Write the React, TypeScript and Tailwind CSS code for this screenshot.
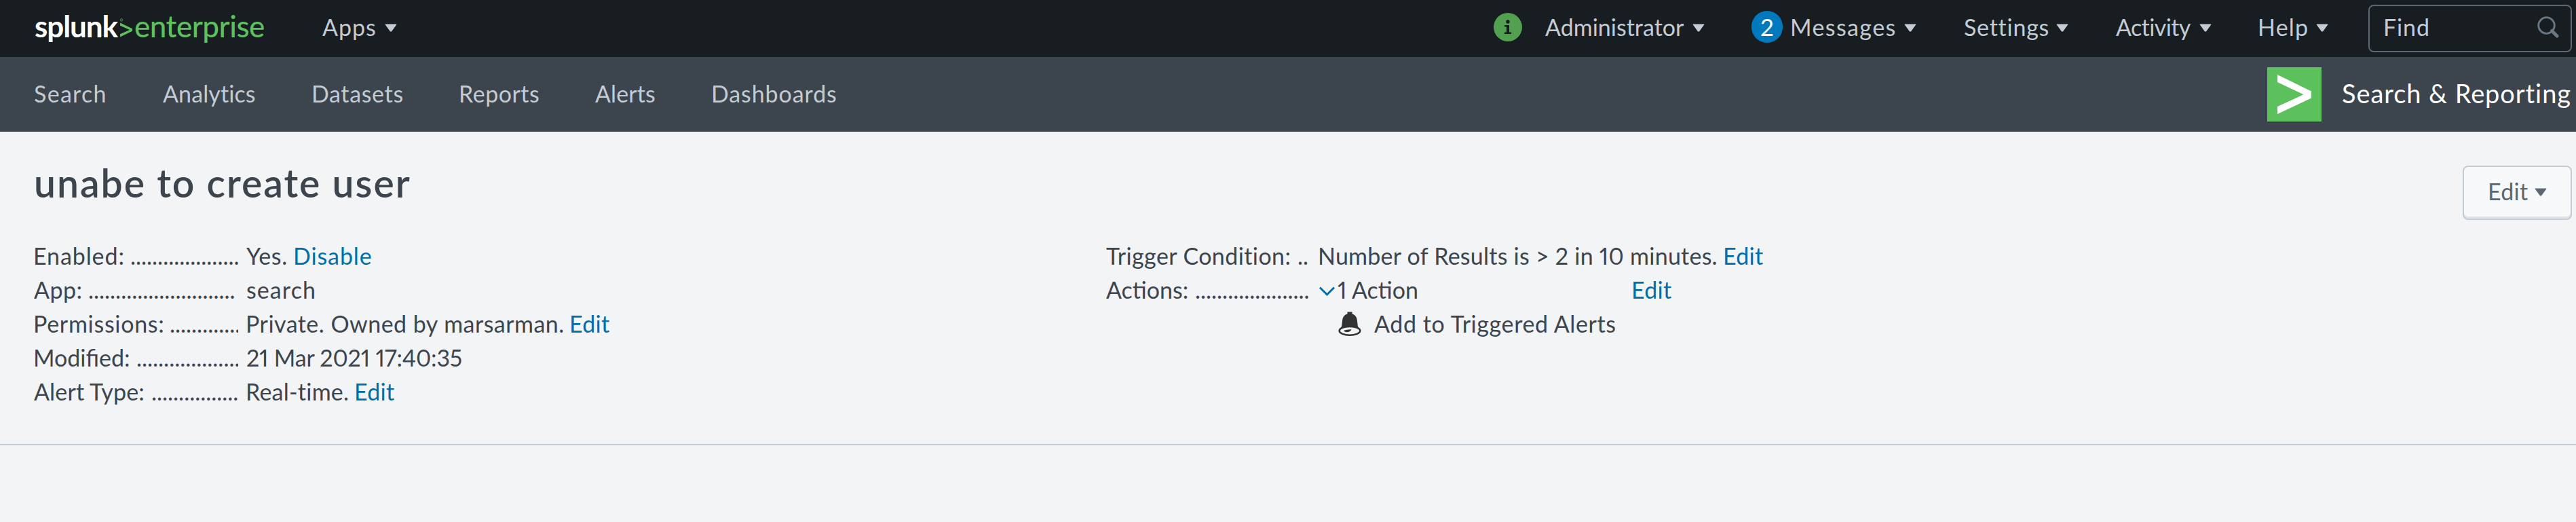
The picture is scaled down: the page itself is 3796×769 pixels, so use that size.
import type { ReactNode } from "react";

function Caret({ className = "" }: { className?: string }) {
  return (
    <svg viewBox="0 0 18 12" className={`h-[12px] w-[18px] shrink-0 ${className}`} fill="currentColor">
      <path d="M1.2 0.5h15.6q1 0 .4.9L10.3 11q-1.3 1.2-2.6 0L.8 1.4q-.6-.9.4-.9z" />
    </svg>
  );
}

function MenuItem({ box, text, children }: { box: string; text: string; children: ReactNode }) {
  return (
    <div className={`flex h-[80px] shrink-0 items-center justify-between ${box}`}>
      <span className={text}>{children}</span>
      <Caret className="mt-[1px]" />
    </div>
  );
}

function Logo() {
  return (
    <div className="flex h-[76px] w-[340px] shrink-0 items-start whitespace-nowrap text-[44px] leading-[76px]">
      <span className="w-[125px] font-bold tracking-[-1.1px] text-white">splunk</span>
      <svg viewBox="0 0 20 30" className="mt-[26px] h-[30px] w-[20px] shrink-0 text-[#5cc05c]" fill="none">
        <path d="M1 7.5v4.2L15 18 1 24.3v4.2L19 19.8v-3.6z" fill="currentColor" />
        <circle cx="3" cy="3.4" r="1.7" stroke="currentColor" strokeOpacity="0.7" />
      </svg>
      <span className="ml-[2px] font-medium tracking-[-0.5px] text-[#5cc05c]">enterprise</span>
    </div>
  );
}

function Link({ children }: { children: ReactNode }) {
  return <a className="tracking-[0.29px] text-[#006eaa]">{children}</a>;
}

type RowProps = { label: string; labelClass: string; labelWidth: string; dots: number; children: ReactNode };

function Row({ label, labelClass, labelWidth, dots, children }: RowProps) {
  return (
    <div className="flex h-[50px] whitespace-nowrap">
      <div className="flex w-[301px] shrink-0 overflow-hidden">
        <span className={`shrink-0 ${labelWidth}`}>
          <span className={labelClass}>{label}</span>
        </span>
        <span>{".".repeat(dots)}</span>
      </div>
      <div className="ml-[12px] flex">{children}</div>
    </div>
  );
}

function Bell() {
  return (
    <svg viewBox="0 0 34 36" className="mt-[7px] h-[36px] w-[34px] shrink-0" fill="none">
      <path
        d="M13.5 0.5h7v3c5 1.3 7 5 7.5 10.5l.9 7.5c.6 1.7 2 2.5 2.6 4H2.5c.8-1.6 2.1-2.4 2.6-4L6 14C6.5 8.5 8.5 4.800 13.5 3.5z"
        fill="#333"
      />
      <ellipse cx="17" cy="28.3" rx="15.3" ry="6.4" fill="#f2f4f5" stroke="#333" strokeWidth="2.6" />
      <path d="M8.5 27.8Q13 26 19.500 26.200Q18 30.300 12.500 30.300Q8.500 30 8.500 27.800z" fill="#333" />
    </svg>
  );
}

export default function App() {
  return (
    <div className="flex h-[769px] w-[3796px] flex-col overflow-hidden whitespace-nowrap bg-[#f2f4f5] font-[Lato,sans-serif] text-[34px] text-[#3c444d] proportional-nums">
      <header className="flex h-[84px] shrink-0 items-start bg-[#171d21] pl-[51px] leading-[80px] text-[#c3cbd4]">
        <Logo />
        <MenuItem box="ml-[84px] w-[110px]" text="tracking-[0.98px]">Apps</MenuItem>
        <div className="ml-[1616px] mt-[19px] flex h-[42px] w-[42px] shrink-0 items-center justify-center rounded-full bg-[#53a051]">
          <svg viewBox="0 0 12 22" className="h-[22px] w-[12px]" fill="#171d21">
            <circle cx="6" cy="3" r="2.7" />
            <path d="M1 8h7v10.5h3V21H1v-2.5h3V10.5H1z" />
          </svg>
        </div>
        <MenuItem box="ml-[34px] w-[235px]" text="">Administrator</MenuItem>
        <div className="ml-[69px] mt-[16px] flex h-[47px] w-[46px] shrink-0 justify-center rounded-full bg-[#007abd] text-[35px] leading-[47px] text-white">2</div>
        <MenuItem box="ml-[11px] w-[186px]" text="tracking-[1.4px]">Messages</MenuItem>
        <MenuItem box="ml-[70px] w-[154px]" text="tracking-[0.75px]">Settings</MenuItem>
        <MenuItem box="ml-[70px] w-[141px]" text="tracking-[-0.6px]">Activity</MenuItem>
        <MenuItem box="ml-[68px] w-[104px]" text="tracking-[1.2px]">Help</MenuItem>
        <div className="ml-[59px] mt-[7px] flex h-[70px] w-[300px] shrink-0 justify-between rounded-[8px] border-2 border-[#5c6773] pl-[20px] pr-[17px] leading-[62px]">
          <span className="tracking-[0.9px]">Find</span>
          <svg viewBox="0 0 32 32" className="mt-[15px] h-[32px] w-[32px]" fill="none" stroke="#6b7785">
            <circle cx="13.5" cy="13.5" r="11.8" strokeWidth="2.8" />
            <path d="M21.5 21.5L29 29" strokeWidth="5" strokeLinecap="round" />
          </svg>
        </div>
      </header>

      <nav className="flex h-[110px] shrink-0 items-start bg-[#3c444d] pl-[50px] leading-[107px] text-[#c3cbd4]">
        <span className="w-[190px] tracking-[1.3px]">Search</span>
        <span className="w-[219px] tracking-[0.11px]">Analytics</span>
        <span className="w-[217px] tracking-[0.64px]">Datasets</span>
        <span className="w-[201px] tracking-[0.5px]">Reports</span>
        <span className="w-[171px] tracking-[0.1px]">Alerts</span>
        <span className="tracking-[0.9px]">Dashboards</span>
        <div className="ml-auto flex pr-[6px]">
          <svg viewBox="0 0 80 80" className="mt-[15px] h-[80px] w-[80px]">
            <path d="M0 0h80v80H0z" fill="#5cc05c" />
            <path d="M15 11L65 35.5v10L15 69V58L53.5 40.3 15 22z" fill="#fff" />
          </svg>
          <span className="ml-[30px] w-[339px] text-[38px] leading-[107px] tracking-[0.92px] text-white">Search &amp; Reporting</span>
        </div>
      </nav>

      <main className="h-[462px] shrink-0 border-b-2 border-[#c3cbd4] pl-[50px] pr-[6px]">
        <div className="flex h-[158px] items-start justify-between">
          <h1 className="text-[57px] font-semibold leading-[151px] tracking-[2px]">unabe to create user</h1>
          <button className="mt-[50px] flex h-[80px] w-[161px] items-start rounded-[8px] border-2 border-[#c3cbd4] bg-[#f7f8fa] pl-[35px] text-left leading-[72px] text-[#5c6773] shadow-[inset_0_-3px_0_#dfe3e8]">
            <span className="w-[69px] tracking-[0.29px]">Edit</span>
            <Caret className="mt-[31px]" />
          </button>
        </div>
        <div className="flex leading-[50px]">
          <div className="w-[1580px]">
            <Row label="Enabled:" labelWidth="w-[143px] -ml-[1px]" labelClass="tracking-[0.9px]" dots={20}>
              <span className="w-[69px] tracking-[0.71px]">Yes.</span>
              <a className="tracking-[0.9px] text-[#006eaa]">Disable</a>
            </Row>
            <Row label="App:" labelWidth="w-[80px]" labelClass="tracking-[0.45px]" dots={27}>
              <span className="tracking-[1.1px]">search</span>
            </Row>
            <Row label="Permissions:" labelWidth="w-[201px] -ml-[1px]" labelClass="tracking-[0.7px]" dots={13}>
              <span className="-ml-[1px] w-[477px] tracking-[0.46px]">Private. Owned by marsarman.</span>
              <Link>Edit</Link>
            </Row>
            <Row label="Modified:" labelWidth="w-[152px] -ml-[1px]" labelClass="tracking-[0px]" dots={19}>
              <span className="tracking-[-0.2px]">21 Mar 2021 17:40:35</span>
            </Row>
            <Row label="Alert Type:" labelWidth="w-[173px]" labelClass="tracking-[0.15px]" dots={16}>
              <span className="-ml-[1px] w-[160px] tracking-[0.23px]">Real-time.</span>
              <Link>Edit</Link>
            </Row>
          </div>
          <div>
            <Row label="Trigger Condition:" labelWidth="w-[282px]" labelClass="tracking-[0.4px]" dots={2}>
              <span className="-ml-[1px] w-[597px] tracking-[0.24px]">Number of Results is &gt; 2 in 10 minutes.</span>
              <Link>Edit</Link>
            </Row>
            <Row label="Actions:" labelWidth="w-[131px]" labelClass="" dots={21}>
              <svg viewBox="0 0 24 14" className="mt-[20px] h-[14px] w-[24px]" fill="none" stroke="#006eaa" strokeWidth="3">
                <path d="M2 1.5L12.5 12 23 1.5" />
              </svg>
              <span className="ml-[4px] w-[433px] tracking-[0px]">1 Action</span>
              <Link>Edit</Link>
            </Row>
            <div className="flex pl-[342px]">
              <Bell />
              <span className="ml-[19px] tracking-[0.6px]">Add to Triggered Alerts</span>
            </div>
          </div>
        </div>
      </main>
    </div>
  );
}
